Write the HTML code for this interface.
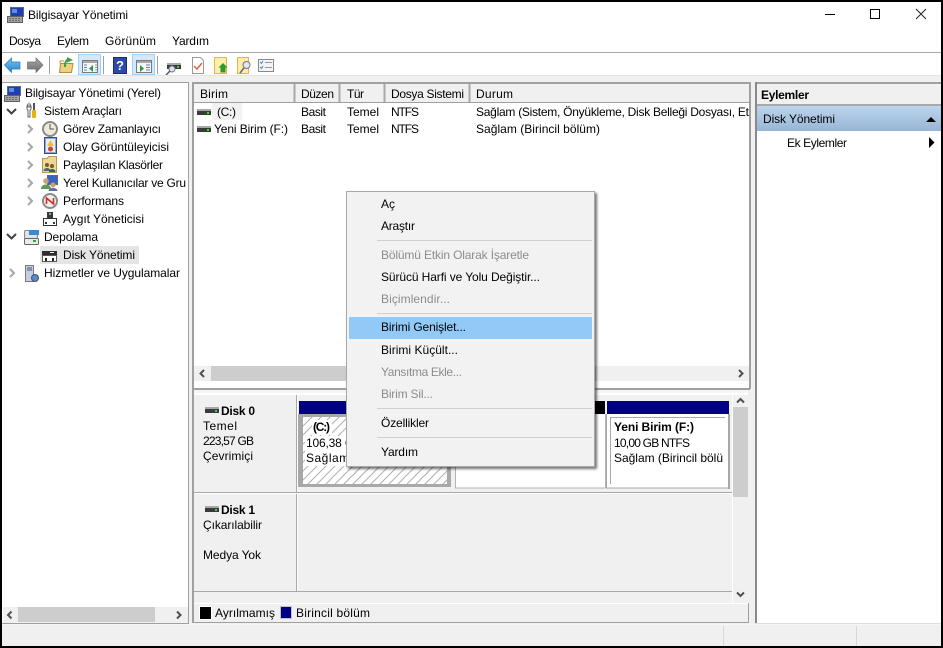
<!DOCTYPE html>
<html><head><meta charset="utf-8"><title>Bilgisayar Yönetimi</title>
<style>
html,body{margin:0;padding:0;width:943px;height:648px;overflow:hidden;background:#000}
svg{display:block}
text{font-family:"Liberation Sans",sans-serif;font-size:12px;fill:#000}
.b{font-weight:bold}
text.d{fill:#8c8c8c}
</style></head><body>
<svg width="943" height="648" viewBox="0 0 943 648" xmlns="http://www.w3.org/2000/svg">
<defs>
<pattern id="h" width="9" height="9" patternUnits="userSpaceOnUse"><rect width="9" height="9" fill="#fff"/><path d="M-1 10L10 -1M-1 1L1 -1M8 10L10 8" stroke="#b0b0b0" stroke-width="1"/></pattern>
<linearGradient id="g" x1="0" y1="0" x2="0" y2="1"><stop offset="0" stop-color="#bcd4eb"/><stop offset="1" stop-color="#98b6d5"/></linearGradient>
<linearGradient id="bl" x1="0" y1="0" x2="0" y2="1"><stop offset="0" stop-color="#7cc4f0"/><stop offset="1" stop-color="#1f86d0"/></linearGradient>
<linearGradient id="gr" x1="0" y1="0" x2="0" y2="1"><stop offset="0" stop-color="#a8a8a8"/><stop offset="1" stop-color="#6c6c6c"/></linearGradient>
<filter id="s" x="-5%" y="-5%" width="110%" height="110%"><feDropShadow dx="2" dy="2" stdDeviation="1.2" flood-color="#000" flood-opacity=".55"/></filter>
<g id="dk"><rect x="0" y="2" width="14" height="2" fill="#a8a8a8"/><rect x="0" y="4" width="14" height="4" fill="#3a3a3a"/><rect x="10" y="5" width="2" height="2" fill="#4c4"/></g>
<g id="ra"><path d="M0 0L4 4L0 8" fill="none" stroke="#a6a6a6" stroke-width="2"/></g>
<g id="da"><path d="M0 0L4.500 4.500L9 0" fill="none" stroke="#404040" stroke-width="2"/></g>
<g id="pc">
<rect x="3.500" y="1.500" width="13" height="9" fill="#1f3fb0" stroke="#5a6a80"/><rect x="5" y="3" width="5" height="4" fill="#5f8ee0"/>
<rect x="0.500" y="10.500" width="15" height="6" fill="#a4a4a4" stroke="#606060"/><path d="M2 12.500H14M2 14.500H14" stroke="#6a6a6a" stroke-dasharray="2 1"/>
</g>
<g id="win"><rect x=".5" y=".5" width="15" height="12" fill="#f6f6f6" stroke="#7a7a7a"/><rect x="1" y="1" width="14" height="2" fill="#a8a8a8"/></g>
</defs>
<rect x="2" y="2" width="939" height="644" fill="#fff"/>

<!-- title bar -->
<use href="#pc" x="7" y="6"/>
<text x="28" y="19" textLength="100">Bilgisayar Yönetimi</text>
<path d="M825 14.500H835" stroke="#000"/>
<rect x="870.500" y="9.500" width="9" height="9" fill="none" stroke="#000"/>
<path d="M916 9L926 19M926 9L916 19" stroke="#222"/>

<!-- menu -->
<text x="9" y="45" textLength="32">Dosya</text>
<text x="57" y="45" textLength="32">Eylem</text>
<text x="105" y="45" textLength="51">Görünüm</text>
<text x="172" y="45" textLength="37">Yardım</text>
<rect x="2" y="52" width="939" height="1" fill="#a8a8a8"/>

<!-- toolbar -->
<path d="M4.500 65L11.500 58V62H20V69H11.500V72.500Z" fill="url(#bl)" stroke="#2a78b8" stroke-width=".7"/>
<path d="M43 65L36 58V62H27.500V69H36V72.500Z" fill="url(#gr)" stroke="#707070" stroke-width=".7"/>
<rect x="49" y="56" width="1" height="18" fill="#a0a0a0"/>
<path d="M60.500 63.500H73L71.500 72.500H59.500Z" fill="#f0d080" stroke="#b09040"/><path d="M60 63V61H64" stroke="#b09040" fill="none"/><path d="M65 67C65 62 66 60 68 60" fill="none" stroke="#35a045" stroke-width="2"/><path d="M67 57L73 60L67 62.500Z" fill="#35a045"/>
<rect x="78.500" y="54.500" width="22" height="20" fill="#d5e8f8" stroke="#99d1ff"/>
<use href="#win" x="82" y="60"/><path d="M93 65L89 68.500L93 72Z" fill="#2a9a4a"/><path d="M84 65H87M84 67.500H87M84 70H87" stroke="#5a80b0"/><path d="M95 65H97M95 67.500H97M95 70H97" stroke="#999"/>
<rect x="103" y="56" width="1" height="18" fill="#a0a0a0"/>
<rect x="113.500" y="57.500" width="13" height="16" fill="#2c4aa8" stroke="#1c2a70"/>
<text x="116" y="70" class="b" style="font-size:13px;fill:#fff">?</text>
<rect x="132.500" y="54.500" width="22" height="20" fill="#d5e8f8" stroke="#99d1ff"/>
<use href="#win" x="136" y="60"/><path d="M140 65L144 68.500L140 72Z" fill="#2a9a4a"/><path d="M146 65H150M146 67.500H150M146 70H150" stroke="#5a80b0"/>
<rect x="157" y="56" width="1" height="18" fill="#a0a0a0"/>
<rect x="167" y="63" width="14" height="2" fill="#aaa"/><rect x="167" y="65" width="14" height="4" fill="#3a3a3a"/><rect x="177" y="66" width="2" height="2" fill="#4c4"/><circle cx="172" cy="69" r="3" fill="#d8e4f0" stroke="#778"/><path d="M170 71L166 75" stroke="#555" stroke-width="1.500"/>
<path d="M192.500 57.500H200.500L203.500 60.500V73.500H192.500Z" fill="#fff" stroke="#9a9a9a"/><path d="M194 66L197 69L202 63" fill="none" stroke="#e0603a" stroke-width="1.500"/>
<rect x="214.500" y="57.500" width="12" height="16" fill="#fdeeaa" stroke="#d8b850"/><path d="M223 63L227.500 67.500H225.500V72.500H220.500V67.500H218.500Z" fill="#2a9a2a"/>
<rect x="237.500" y="57.500" width="11" height="16" fill="#fdeeaa" stroke="#d8b850"/><circle cx="246.500" cy="65" r="3.500" fill="#dde8f4" stroke="#778"/><path d="M244 68L240 73" stroke="#667" stroke-width="1.500"/>
<rect x="258.500" y="59.500" width="15" height="12" fill="#f4f4f4" stroke="#888"/><path d="M260 62L261.500 63.500L263 61M260 67L261.500 68.500L263 66" fill="none" stroke="#3a8ad8"/><path d="M265 62.500H272M265 67.500H272" stroke="#999"/>

<rect x="2" y="75" width="939" height="7" fill="#f0f0f0"/>
<rect x="2" y="75" width="939" height="1" fill="#e3e3e3"/>

<!-- left tree pane -->
<rect x="189" y="82" width="3" height="544" fill="#f0f0f0"/>
<rect x="2" y="82" width="187" height="1" fill="#a0a0a0"/>
<rect x="188" y="82" width="1" height="542" fill="#a0a0a0"/>
<use href="#pc" x="4" y="85"/>
<text x="25" y="97" textLength="136">Bilgisayar Yönetimi (Yerel)</text>
<use href="#da" x="7" y="109"/>
<path d="M28 104C26 107 27 110 28 110V117H30V110C31 110 32 107 30 104V107H28Z" fill="#fff" stroke="#666"/>
<rect x="33" y="103" width="2" height="7" fill="#555"/><rect x="32" y="110" width="4" height="8" rx="1" fill="#e8b010"/>
<text x="44" y="115" textLength="78">Sistem Araçları</text>
<use href="#ra" x="28" y="125"/>
<circle cx="50" cy="129" r="7" fill="#f0ead8" stroke="#8a8a8a" stroke-width="2"/><path d="M50 124V129H54" fill="none" stroke="#555"/>
<text x="63" y="133" textLength="98">Görev Zamanlayıcı</text>
<use href="#ra" x="28" y="143"/>
<rect x="44.500" y="137.500" width="12" height="16" fill="#8aa8d8" stroke="#3a4a78"/><rect x="46" y="139" width="9" height="13" fill="#e8ecf4"/><path d="M50.500 140L54 146H47Z" fill="#f0c020"/><circle cx="50.500" cy="149" r="2.500" fill="#c84040"/>
<text x="63" y="151" textLength="106">Olay Görüntüleyicisi</text>
<use href="#ra" x="28" y="161"/>
<path d="M42.500 158.500H47L49 156.500H56.500V172.500H42.500Z" fill="#f0d890" stroke="#b09a58"/><circle cx="47" cy="165" r="2" fill="#7a5a30"/><path d="M43.500 171C43.500 167 50.500 167 50.500 171Z" fill="#4a6a8a"/><circle cx="52" cy="166" r="2" fill="#7a5a30"/><path d="M49 172C49 168 55.500 168 55.500 172Z" fill="#3a5a7a"/>
<text x="63" y="169" textLength="100">Paylaşılan Klasörler</text>
<use href="#ra" x="28" y="179"/>
<rect x="47.500" y="175.500" width="10" height="9" fill="#3a62c0" stroke="#667"/><circle cx="46" cy="181" r="2.800" fill="#c9a078"/><path d="M41 189C41 183 51 183 51 189Z" fill="#5a9a5a"/><circle cx="53" cy="185" r="2.500" fill="#c9a078"/><path d="M48.500 191C48.500 187 57.500 187 57.500 191Z" fill="#6a6a9a"/>
<text x="63" y="187" textLength="123">Yerel Kullanıcılar ve Gru</text>
<use href="#ra" x="28" y="197"/>
<circle cx="50" cy="201" r="7" fill="#f6f2e8" stroke="#8a8a8a" stroke-width="2"/><path d="M46.500 204V198L53.500 204V198" fill="none" stroke="#d02a2a" stroke-width="1.600"/>
<text x="63" y="205" textLength="61">Performans</text>
<rect x="47" y="212" width="6" height="6" fill="#3a3a3a"/><rect x="49" y="213" width="2" height="2" fill="#5c5"/><rect x="43.500" y="218.500" width="13" height="7" fill="#fff" stroke="#333"/><rect x="45" y="222" width="2" height="2" fill="#333"/><rect x="53" y="222" width="2" height="2" fill="#333"/>
<text x="63" y="223" textLength="81">Aygıt Yöneticisi</text>
<use href="#da" x="7" y="234"/>
<rect x="24.500" y="230.500" width="13" height="8" rx="1.500" fill="#dfe4e8" stroke="#888"/><rect x="29" y="230" width="10" height="5" fill="#3a8ad0"/><rect x="24.500" y="238.500" width="14" height="6" rx="1" fill="#e8ecec" stroke="#666"/><rect x="33" y="240" width="3" height="2" fill="#3a3"/>
<text x="44" y="241" textLength="54">Depolama</text>
<rect x="40" y="246" width="99" height="18" fill="#e5e5e5"/>
<rect x="42" y="251" width="15" height="4" fill="#2e2e2e"/><rect x="50" y="252" width="4" height="1" fill="#eee"/><rect x="42.500" y="255.500" width="14" height="6" fill="#fff" stroke="#555"/><rect x="45" y="258" width="2" height="3" fill="#222"/><rect x="52" y="258" width="2" height="3" fill="#222"/>
<text x="63" y="259" textLength="72">Disk Yönetimi</text>
<use href="#ra" x="10" y="269"/>
<rect x="25.500" y="265.500" width="8" height="16" fill="#c4d0e0" stroke="#778"/><path d="M27 268H32M27 270H32" stroke="#556"/><circle cx="35" cy="278" r="3.500" fill="#5a8ac8" stroke="#456"/>
<text x="44" y="277" textLength="136">Hizmetler ve Uygulamalar</text>
<!-- left hscroll -->
<rect x="3" y="607" width="185" height="16" fill="#f0f0f0"/>
<rect x="18" y="607" width="137" height="15" fill="#cdcdcd"/>
<path d="M11.500 611.500L8 615L11.500 618.500" fill="none" stroke="#505050" stroke-width="2"/>
<path d="M177 611.500L180.500 615L177 618.500" fill="none" stroke="#505050" stroke-width="2"/>
<rect x="2" y="623" width="187" height="1" fill="#a0a0a0"/>

<!-- middle: list -->
<rect x="192" y="82" width="2" height="541" fill="#a0a0a0"/>
<rect x="192" y="82" width="558" height="2" fill="#a0a0a0"/>
<rect x="749" y="82" width="2" height="307" fill="#a0a0a0"/>
<rect x="194" y="84" width="555" height="18" fill="#f0f0f0"/>
<path d="M294.500 84V102M339.500 84V102M384.500 84V102M469.500 84V102" stroke="#a8a8a8" stroke-width="2"/>
<rect x="194" y="102" width="555" height="1" fill="#a0a0a0"/>
<text x="200" y="98" textLength="28">Birim</text>
<text x="301" y="98" textLength="33">Düzen</text>
<text x="347" y="98" textLength="17">Tür</text>
<text x="391" y="98" textLength="73">Dosya Sistemi</text>
<text x="476" y="98" textLength="37">Durum</text>
<rect x="212" y="103" width="30" height="17" fill="#f2f2f2"/>
<use href="#dk" x="197" y="107"/>
<text x="217" y="116" textLength="19">(C:)</text>
<text x="301" y="116" textLength="25">Basit</text>
<text x="347" y="116" textLength="32">Temel</text>
<text x="391" y="116" textLength="28">NTFS</text>
<text x="476" y="116" textLength="273">Sağlam (Sistem, Önyükleme, Disk Belleği Dosyası, Et</text>
<use href="#dk" x="197" y="124"/>
<text x="214" y="133" textLength="74">Yeni Birim (F:)</text>
<text x="301" y="133" textLength="25">Basit</text>
<text x="347" y="133" textLength="32">Temel</text>
<text x="391" y="133" textLength="28">NTFS</text>
<text x="476" y="133" textLength="124">Sağlam (Birincil bölüm)</text>
<!-- list hscroll -->
<rect x="194" y="366" width="555" height="15" fill="#f0f0f0"/>
<rect x="211" y="366" width="385" height="15" fill="#cdcdcd"/>
<path d="M204 370L200.500 373.500L204 377" fill="none" stroke="#505050" stroke-width="2"/>
<path d="M739 370L742.500 373.500L739 377" fill="none" stroke="#505050" stroke-width="2"/>
<rect x="194" y="381" width="555" height="7" fill="#fff"/>
<!-- splitter -->
<rect x="193" y="388" width="557" height="2" fill="#a0a0a0"/>
<rect x="194" y="390" width="555" height="5" fill="#f6f6f6"/>

<!-- disk area -->
<rect x="194" y="393" width="555" height="229" fill="#f0f0f0"/>
<rect x="194" y="393" width="555" height="2" fill="#fff"/>
<rect x="296" y="395" width="1" height="197" fill="#a8a8a8"/>
<rect x="297" y="395" width="1" height="197" fill="#fff"/>
<rect x="194" y="492" width="539" height="1" fill="#a8a8a8"/>
<rect x="194" y="493" width="539" height="1" fill="#fff"/>
<rect x="194" y="591" width="538" height="1" fill="#a8a8a8"/>
<rect x="732" y="395" width="1" height="208" fill="#fff"/>

<use href="#dk" x="205" y="405"/>
<text x="221" y="415" class="b" textLength="34">Disk 0</text>
<text x="203" y="430" textLength="34">Temel</text>
<text x="203" y="445" textLength="51">223,57 GB</text>
<text x="203" y="460" textLength="50">Çevrimiçi</text>
<use href="#dk" x="205" y="504"/>
<text x="221" y="514" class="b" textLength="34">Disk 1</text>
<text x="203" y="529" textLength="59">Çıkarılabilir</text>
<text x="203" y="559" textLength="58">Medya Yok</text>

<rect x="299" y="401" width="153" height="13" fill="#000080"/>
<rect x="452" y="401" width="153" height="13" fill="#000"/>
<rect x="607" y="401" width="122" height="13" fill="#000080"/>
<rect x="298" y="414" width="153" height="73" fill="#a8a8a8"/>
<rect x="303" y="417" width="144" height="67" fill="url(#h)"/>
<rect x="312" y="420" width="20" height="15" fill="#fff"/>
<rect x="305" y="436" width="44" height="30" fill="#fff"/>
<text x="313" y="431" class="b" textLength="17">(C:)</text>
<text x="306" y="447" textLength="56">106,38 GB</text>
<text x="306" y="462" textLength="60">Sağlam (B</text>
<rect x="455" y="414" width="150" height="74" fill="#fff"/>
<path d="M455.500 414V488H605M605.500 414V488" fill="none" stroke="#b4b4b4"/>
<rect x="606" y="414" width="123" height="74" fill="#fff"/>
<path d="M606.500 414V488H729" fill="none" stroke="#a8a8a8"/>
<rect x="728" y="414" width="2" height="75" fill="#a8a8a8"/>
<path d="M610.500 484V417.500H725" fill="none" stroke="#a8a8a8"/>
<text x="614" y="431" class="b" textLength="80">Yeni Birim  (F:)</text>
<text x="614" y="447" textLength="76">10,00 GB NTFS</text>
<text x="614" y="462" textLength="109">Sağlam (Birincil bölü</text>

<!-- vscroll -->
<rect x="733" y="395" width="15" height="208" fill="#f0f0f0"/>
<rect x="733" y="407" width="15" height="90" fill="#cdcdcd"/>
<path d="M737 402.500L740.500 399L744 402.500" fill="none" stroke="#505050" stroke-width="2"/>
<path d="M737 592.500L740.500 596L744 592.500" fill="none" stroke="#505050" stroke-width="2"/>

<!-- legend -->
<rect x="194" y="603" width="555" height="1" fill="#fff"/>
<rect x="199.500" y="606.500" width="12" height="13" fill="#000" stroke="#fff"/>
<text x="215" y="617" textLength="60">Ayrılmamış</text>
<rect x="280.500" y="606.500" width="11" height="12" fill="#000080" stroke="#c0c0c0"/>
<text x="296" y="617" textLength="74">Birincil bölüm</text>
<rect x="192" y="622" width="557" height="1" fill="#a0a0a0"/>
<rect x="748" y="603" width="1" height="20" fill="#a0a0a0"/>

<!-- gap right of middle -->
<rect x="748" y="390" width="7" height="213" fill="#f0f0f0"/>
<rect x="733" y="407" width="15" height="90" fill="#cdcdcd"/>
<rect x="749" y="603" width="6" height="21" fill="#f0f0f0"/>
<rect x="751" y="82" width="4" height="544" fill="#f0f0f0"/>

<!-- actions -->
<rect x="755" y="82" width="186" height="2" fill="#a0a0a0"/>
<rect x="755" y="82" width="2" height="541" fill="#8a8a8a"/>
<rect x="757" y="84" width="184" height="20" fill="#f0f0f0"/>
<rect x="757" y="104" width="184" height="2" fill="#a8a8a8"/>
<text x="761" y="99" class="b" textLength="48">Eylemler</text>
<rect x="757" y="106" width="184" height="25" fill="url(#g)"/>
<text x="763" y="123" textLength="72">Disk Yönetimi</text>
<path d="M926 122L931 117L936 122Z" fill="#000"/>
<text x="787" y="147" textLength="60">Ek Eylemler</text>
<path d="M929 137L934.500 142.500L929 148Z" fill="#000"/>

<!-- status bar -->
<rect x="2" y="623" width="939" height="23" fill="#f0f0f0"/>
<rect x="2" y="623" width="187" height="1" fill="#a0a0a0"/>
<rect x="192" y="622" width="557" height="1" fill="#a0a0a0"/>
<rect x="755" y="623" width="186" height="1" fill="#dedede"/>
<rect x="2" y="624" width="939" height="1" fill="#f6f6f6"/>
<rect x="723" y="626" width="1" height="20" fill="#d8d8d8"/>
<rect x="856" y="626" width="1" height="20" fill="#d8d8d8"/>

<!-- context menu -->
<rect x="346.500" y="191.500" width="248" height="275" fill="#f2f2f2" stroke="#a8a8a8" filter="url(#s)"/>
<rect x="349" y="317" width="243" height="22" fill="#91c9f7"/>
<rect x="377" y="240" width="215" height="1" fill="#d0d0d0"/>
<rect x="377" y="313" width="215" height="1" fill="#d0d0d0"/>
<rect x="377" y="408" width="215" height="1" fill="#d0d0d0"/>
<rect x="377" y="437" width="215" height="1" fill="#d0d0d0"/>
<text x="381" y="208" textLength="14">Aç</text>
<text x="381" y="230" textLength="34">Araştır</text>
<text x="381" y="259" textLength="148" class="d">Bölümü Etkin Olarak İşaretle</text>
<text x="381" y="281" textLength="159">Sürücü Harfi ve Yolu Değiştir...</text>
<text x="381" y="303" textLength="69" class="d">Biçimlendir...</text>
<text x="381" y="331" textLength="85">Birimi Genişlet...</text>
<text x="381" y="354" textLength="77">Birimi Küçült...</text>
<text x="381" y="376" textLength="81" class="d">Yansıtma Ekle...</text>
<text x="381" y="398" textLength="52" class="d">Birim Sil...</text>
<text x="381" y="427" textLength="48">Özellikler</text>
<text x="381" y="456" textLength="37">Yardım</text>
</svg>
</body></html>
